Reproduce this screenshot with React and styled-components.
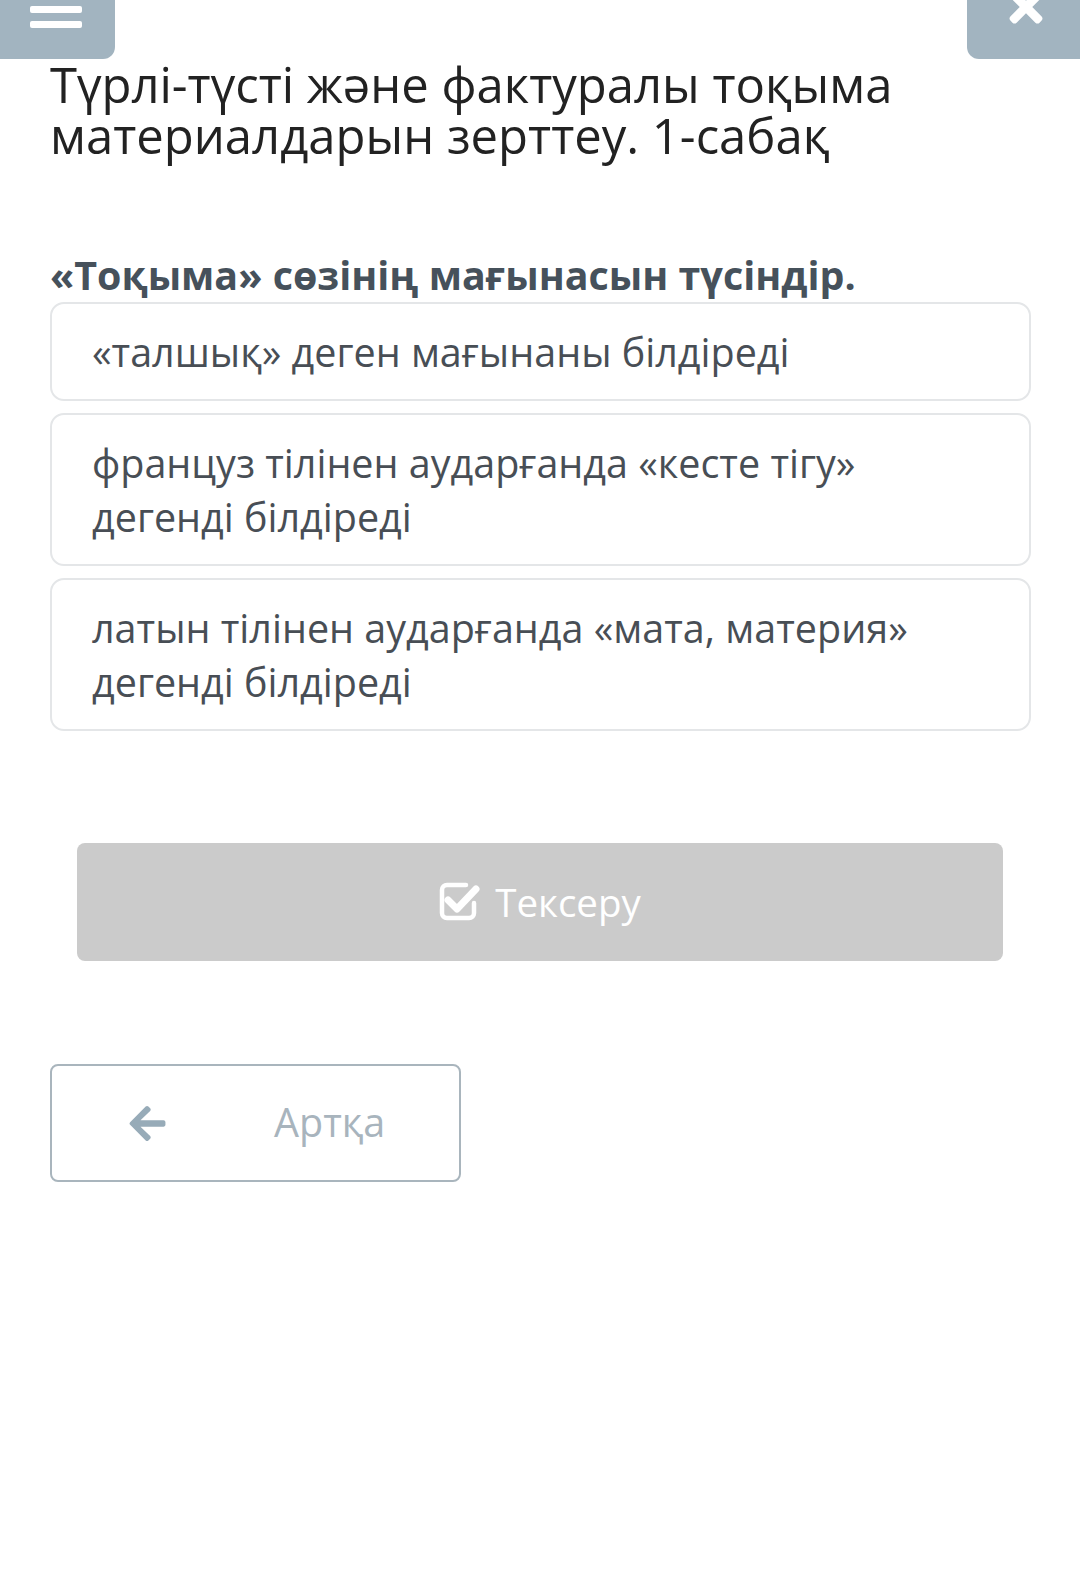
import React from 'react'
import styled, { createGlobalStyle } from 'styled-components'
import { FaArrowLeft, FaTimes } from 'react-icons/fa'

const BLUE_GREY = '#a2b4c0'

const GlobalStyle = createGlobalStyle`
  html, body {
    margin: 0;
    padding: 0;
    background: #fff;
  }
  body {
    font-family: 'Open Sans', 'Noto Sans', sans-serif;
  }
  * {
    box-sizing: border-box;
  }
`

const Page = styled.div`
  width: 1080px;
  min-height: 1580px;
  background: #fff;
`

const TopBar = styled.div`
  display: flex;
  justify-content: space-between;
  height: 59px;
  overflow: hidden;
`

const TopButton = styled.div`
  width: ${props => props.wide ? '115px' : '113px'};
  height: 110px;
  margin-top: -51px;
  background: ${BLUE_GREY};
  border-radius: ${props => props.side === 'left' ? '0 0 12px 0' : '0 0 0 12px'};
  display: flex;
  align-items: center;
  justify-content: center;
  color: #fff;
  padding-left: ${props => props.side === 'left' ? '0' : '4px'};
  padding-top: ${props => props.side === 'left' ? '10px' : '6px'};
`

const Burger = styled.div`
  display: flex;
  flex-direction: column;
  gap: 8px;
  width: 52px;
  margin-right: 4px;

  span {
    display: block;
    height: 7px;
    border-radius: 2px;
    background: #fff;
  }
`

const Content = styled.div`
  padding: 0 49px 0 50px;
`

const Title = styled.h1`
  margin: 0;
  font-size: 49px;
  line-height: 51px;
  font-weight: 400;
  color: #222;
`

const Question = styled.h2`
  margin: 92px 0 5px;
  font-size: 39.4px;
  line-height: 44px;
  font-weight: 700;
  color: #46515b;
`

const Options = styled.div`
  display: flex;
  flex-direction: column;
  gap: 12px;
`

const Option = styled.div`
  border: 2px solid #e4e6e8;
  border-radius: 14px;
  padding: 20.5px 40px;
  font-size: 39.5px;
  line-height: 54px;
  color: #484e55;
`

const Actions = styled.div`
  display: flex;
  justify-content: center;
  padding: 112px 28px 0 27px;
`

const CheckButton = styled.button`
  width: 100%;
  height: 118px;
  border: none;
  border-radius: 8px;
  background: #cbcbcb;
  color: #fff;
  font-family: 'Open Sans', sans-serif;
  font-size: 38.5px;
  display: flex;
  align-items: center;
  justify-content: center;
  gap: 14px;

  svg {
    margin-top: -2px;
  }
`

const BackRow = styled.div`
  display: flex;
  padding-top: 103px;
`

const BackButton = styled.button`
  width: 411px;
  height: 118px;
  border: 2px solid #a9b5bd;
  border-radius: 8px;
  background: #fff;
  color: #a8b4bd;
  font-family: 'Open Sans', sans-serif;
  font-size: 39.5px;
  display: flex;
  align-items: center;
  padding: 0 0 0 75px;

  svg {
    color: #97abb8;
  }

  span {
    margin-left: 106px;
    margin-top: -2px;
  }
`

const CheckSquareIcon = () => (
  <svg width='42' height='40' viewBox='0 0 42 40'>
    <path
      d='M27 4 H8 a5 5 0 0 0 -5 5 V32 a5 5 0 0 0 5 5 H30 a5 5 0 0 0 5 -5 V22'
      fill='none'
      stroke='#fff'
      strokeWidth='4.5'
      strokeLinecap='round'
    />
    <path
      d='M9 19 L18 28 L37 8'
      fill='none'
      stroke='#fff'
      strokeWidth='7'
      strokeLinecap='round'
      strokeLinejoin='round'
    />
  </svg>
)

const answers = [
  '«талшық» деген мағынаны білдіреді',
  'француз тілінен аударғанда «кесте тігу» дегенді білдіреді',
  'латын тілінен аударғанда «мата, материя» дегенді білдіреді'
]

const App = () => {
  return (
    <Page>
      <GlobalStyle />
      <TopBar>
        <TopButton side='left' wide>
          <Burger>
            <span />
            <span />
            <span />
          </Burger>
        </TopButton>
        <TopButton side='right'>
          <FaTimes size={48} />
        </TopButton>
      </TopBar>
      <Content>
        <Title>Түрлі-түсті және фактуралы тоқыма материалдарын зерттеу. 1-сабақ</Title>
        <Question>«Тоқыма» сөзінің мағынасын түсіндір.</Question>
        <Options>
          {answers.map((answer, index) => (
            <Option key={index}>{answer}</Option>
          ))}
        </Options>
        <Actions>
          <CheckButton>
            <CheckSquareIcon />
            Тексеру
          </CheckButton>
        </Actions>
        <BackRow>
          <BackButton>
            <FaArrowLeft size={41} />
            <span>Артқа</span>
          </BackButton>
        </BackRow>
      </Content>
    </Page>
  )
}

export default App
